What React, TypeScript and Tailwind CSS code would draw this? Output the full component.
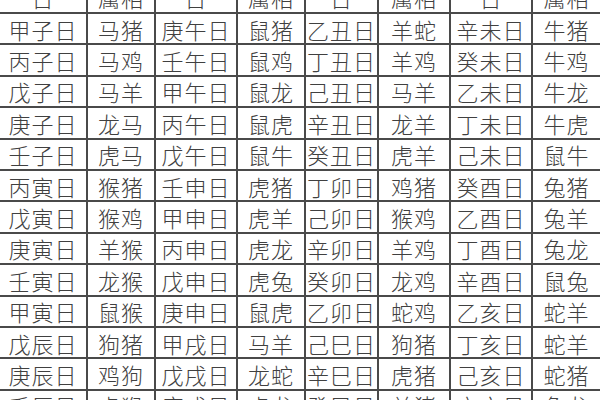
const header = ["日", "属相", "日", "属相", "日", "属相", "日", "属相"];

const rows: string[][] = [
  ["甲子日", "马猪", "庚午日", "鼠猪", "乙丑日", "羊蛇", "辛未日", "牛猪"],
  ["丙子日", "马鸡", "壬午日", "鼠鸡", "丁丑日", "羊鸡", "癸未日", "牛鸡"],
  ["戊子日", "马羊", "甲午日", "鼠龙", "己丑日", "马羊", "乙未日", "牛龙"],
  ["庚子日", "龙马", "丙午日", "鼠虎", "辛丑日", "龙羊", "丁未日", "牛虎"],
  ["壬子日", "虎马", "戊午日", "鼠牛", "癸丑日", "虎羊", "己未日", "鼠牛"],
  ["丙寅日", "猴猪", "壬申日", "虎猪", "丁卯日", "鸡猪", "癸酉日", "兔猪"],
  ["戊寅日", "猴鸡", "甲申日", "虎羊", "己卯日", "猴鸡", "乙酉日", "兔羊"],
  ["庚寅日", "羊猴", "丙申日", "虎龙", "辛卯日", "羊鸡", "丁酉日", "兔龙"],
  ["壬寅日", "龙猴", "戊申日", "虎兔", "癸卯日", "龙鸡", "辛酉日", "鼠兔"],
  ["甲寅日", "鼠猴", "庚申日", "鼠虎", "乙卯日", "蛇鸡", "乙亥日", "蛇羊"],
  ["戊辰日", "狗猪", "甲戌日", "马羊", "己巳日", "狗猪", "丁亥日", "蛇羊"],
  ["庚辰日", "鸡狗", "戊戌日", "龙蛇", "辛巳日", "虎猪", "己亥日", "蛇猪"],
  ["壬辰日", "虎猴", "庚戌日", "虎龙", "癸巳日", "羊猪", "辛亥日", "兔龙"],
];

function Cell({ text }: { text: string }) {
  return (
    <div className="flex items-center justify-center overflow-visible whitespace-nowrap bg-white text-[22px] font-light leading-none text-[#404040] tracking-[1px]">
      {text}
    </div>
  );
}

export default function App() {
  return (
    <div
      className="w-[600px] h-[400px] overflow-hidden bg-white"
      style={{ fontFamily: '"Noto Sans CJK SC", "Noto Sans", sans-serif' }}
    >
      {/* table grid: the gap is the ruling */}
      <div className="-mt-[17.4px] grid grid-cols-[86px_66px_80px_66px_71px_70px_80px_67px] auto-rows-[29.4px] gap-[2px] bg-[#4a4a4a]">
        {header.map((h, i) => (
          <Cell key={`h-${i}`} text={h} />
        ))}
        {rows.map((row, r) =>
          row.map((c, i) => <Cell key={`${r}-${i}`} text={c} />)
        )}
      </div>
    </div>
  );
}
